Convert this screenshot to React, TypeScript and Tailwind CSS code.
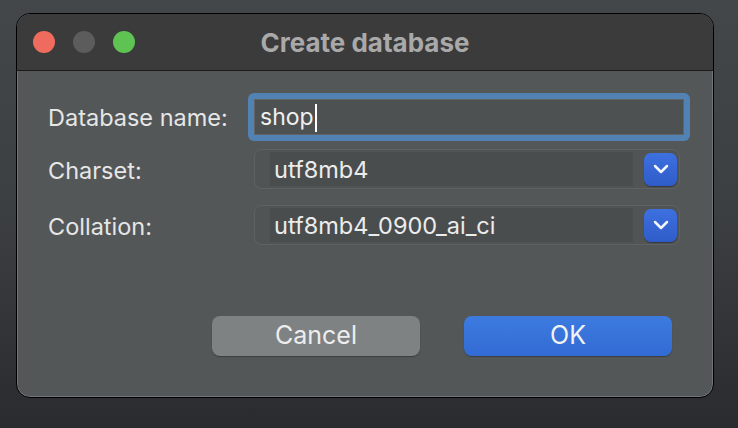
import React from "react";

const font = { fontFamily: "Inter, 'Liberation Sans', sans-serif" };

const Chevron: React.FC = () => (
    <svg width="16" height="10" viewBox="0 0 16 10">
        <path d="M2 2 L8 8 L14 2" fill="none" stroke="#f2f4ff" strokeWidth="2.5" strokeLinecap="round" strokeLinejoin="round" />
    </svg>
);

const Select: React.FC<{ value: string }> = ({ value }) => (
    <div className="flex flex-row items-center h-[40px] w-[426px] rounded-[8px] border border-[#5f6263] bg-[#515455] pl-[15px] pr-[2px]">
        <div className="flex items-center h-[34px] flex-1 bg-[#4a4d4e] pl-[4px] pt-[2px] text-[23.5px] text-[#ececec]">
            {value}
        </div>
        <div className="flex items-center justify-center ml-[11px] h-[33px] w-[33px] rounded-[7px] bg-gradient-to-b from-[#3e70e0] to-[#2f5cc8] shadow-[0_1px_1px_rgba(0,0,0,0.35)]">
            <Chevron />
        </div>
    </div>
);

const App: React.FC = () => {
    return (
        <div className="h-[428px] w-[738px] overflow-hidden bg-gradient-to-b from-[#44474a] via-[#3c3f42] to-[#2a2b2e] pt-[13px] pl-[16px]" style={font}>
            <div className="w-[698px] h-[385px] rounded-[14px] border border-black bg-[#545758] overflow-hidden flex flex-col shadow-[inset_0_0_0_1px_rgba(255,255,255,0.18)]">
                <div className="relative flex flex-row items-center h-[57px] bg-[#3b3b3b] border-b border-[#1c1c1c] pl-[16px] gap-[18px]">
                    <div className="w-[22px] h-[22px] rounded-full bg-[#ef6b5e]" />
                    <div className="w-[22px] h-[22px] rounded-full bg-[#5c5c5c]" />
                    <div className="w-[22px] h-[22px] rounded-full bg-[#5ec353]" />
                    <div className="absolute inset-0 flex items-center justify-center text-[26px] font-bold text-[#a9a9a9]">
                        Create database
                    </div>
                </div>
                <div className="flex flex-col pl-[31px] pt-[22px]">
                    <div className="flex flex-row items-center h-[48px]">
                        <span className="w-[200px] pt-[2px] text-[23.5px] text-[#e6e6e6]">Database name:</span>
                        <div className="flex items-center h-[48px] w-[442px] rounded-[6px] bg-[#5282b4] p-[6px]">
                            <div className="flex items-center h-full w-full bg-[#4e5152] border border-[#616465] pl-[5px] pt-[1px] text-[23px] text-[#f0f0f0]">
                                shop<span className="inline-block w-[2px] h-[28px] bg-white ml-[1px]" />
                            </div>
                        </div>
                    </div>
                    <div className="flex flex-row items-center mt-[8px]">
                        <span className="w-[206px] pt-[3px] text-[23.5px] text-[#e6e6e6]">Charset:</span>
                        <Select value="utf8mb4" />
                    </div>
                    <div className="flex flex-row items-center mt-[16px]">
                        <span className="w-[206px] pt-[3px] text-[23.5px] text-[#e6e6e6]">Collation:</span>
                        <Select value="utf8mb4_0900_ai_ci" />
                    </div>
                    <div className="flex flex-row mt-[71px] pl-[164px] gap-[44px]">
                        <button className="h-[40px] w-[208px] rounded-[8px] bg-[#7f8283] text-[25px] text-[#ededed] shadow-[0_1px_1px_rgba(0,0,0,0.3)]">Cancel</button>
                        <button className="h-[40px] w-[208px] rounded-[8px] bg-gradient-to-b from-[#3d7be0] to-[#326bd3] text-[25px] text-[#f2f2f2] shadow-[0_1px_1px_rgba(0,0,0,0.3)]">OK</button>
                    </div>
                </div>
            </div>
        </div>
    );
};

export default App;
